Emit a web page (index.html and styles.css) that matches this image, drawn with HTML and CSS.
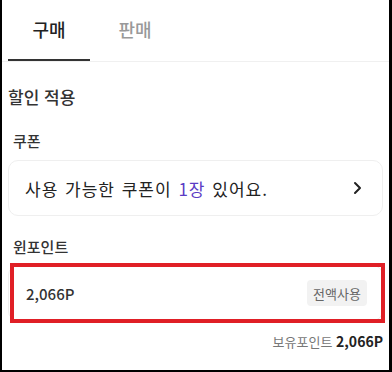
FILE: index.html
```html
<!DOCTYPE html>
<html lang="ko">
<head>
    <meta charset="UTF-8">
    <meta name="viewport" content="width=device-width, initial-scale=1.0">
    <title>할인 적용</title>
    <link rel="stylesheet" href="styles.css">
</head>
<body>
    <div class="screen">
        <div class="tabs">
            <div class="tab active">구매</div>
            <div class="tab">판매</div>
        </div>

        <div class="content">
            <h2 class="section-title">할인 적용</h2>

            <div class="label">쿠폰</div>
            <div class="card coupon">
                <span>사용 가능한 쿠폰이 <em class="count">1장</em> 있어요.</span>
                <svg class="chevron" width="10" height="14" viewBox="0 0 10 14">
                    <path d="M3 2l5 5-5 5" fill="none" stroke="#222" stroke-width="2" stroke-linecap="round" stroke-linejoin="round"/>
                </svg>
            </div>

            <div class="label point-label">윈포인트</div>
            <div class="card point">
                <span class="point-value">2,066P</span>
                <button class="use-all">전액사용</button>
            </div>

            <div class="owned">보유포인트 <strong>2,066P</strong></div>
        </div>

        <div class="highlight"></div>
    </div>
</body>
</html>
```

FILE: styles.css
```css
body {
    margin: 0;
    background-color: #000;
    font-family: "Noto Sans CJK KR", "Noto Sans", sans-serif;
    color: #222;
}

.screen {
    position: relative;
    margin-left: 2px;
    width: 387px;
    height: 370px;
    background-color: #fff;
    overflow: hidden;
}

.tabs {
    display: flex;
    gap: 4px;
    padding: 0 6px;
    border-bottom: 1px solid #f0f0f0;
}

.tab {
    width: 82px;
    height: 59px;
    line-height: 59px;
    text-align: center;
    font-size: 18px;
    font-weight: 500;
    color: #999;
    border-bottom: 2px solid transparent;
}

.tab.active {
    color: #222;
    border-bottom-color: #333;
}

.content {
    padding: 0 6px;
}

.section-title {
    margin: 23px 0 0;
    font-size: 17px;
    font-weight: 500;
    line-height: 24px;
    color: #333;
}

.label {
    margin: 21px 0 8px 5px;
    font-size: 15px;
    font-weight: 500;
    line-height: 22px;
    color: #333;
}

.point-label {
    margin-top: 20px;
    margin-bottom: 7px;
}

.card {
    display: flex;
    align-items: center;
    justify-content: space-between;
    height: 56px;
    box-sizing: border-box;
    border: 1px solid #efefef;
    border-radius: 10px;
}

.coupon {
    padding: 0 20px 0 16px;
    font-size: 17px;
    letter-spacing: 1px;
    word-spacing: 1px;
    color: #222;
}

.count {
    font-style: normal;
    color: #5b3cc4;
}

.point {
    padding: 0 15px 0 17px;
}

.point-value {
    font-size: 15px;
    font-weight: 500;
    color: #333;
}

.use-all {
    width: 60px;
    height: 26px;
    padding: 0;
    border: none;
    border-radius: 4px;
    background-color: #f2f2f2;
    font-family: inherit;
    font-size: 13px;
    color: #666;
}

.owned {
    margin-top: 10px;
    text-align: right;
    font-size: 13px;
    line-height: 20px;
    color: #777;
}

.owned strong {
    font-size: 14px;
    color: #222;
}

.highlight {
    position: absolute;
    left: 8px;
    top: 263px;
    width: 375px;
    height: 60px;
    box-sizing: border-box;
    border: 4px solid #e01f26;
}
```
